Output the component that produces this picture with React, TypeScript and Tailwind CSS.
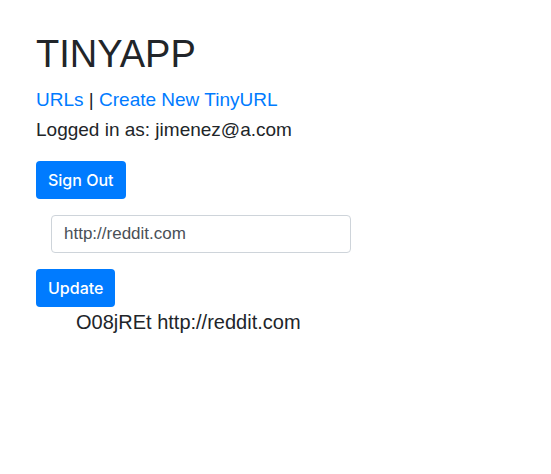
import React from 'react'

const App = () => {
  return (
    <div className="min-h-screen bg-white text-[#212529] px-9 pt-[30px]">
      <div className="font-['Liberation_Sans',Arial,sans-serif]">
        <h1 className="text-[38px] leading-[48px] font-medium mb-[7px]">TINYAPP</h1>
        <div className="text-[19px] leading-[30px] text-[#007bff]">
          <a href="#">URLs</a>
          <span className="text-[#212529]"> | </span>
          <a href="#">Create New TinyURL</a>
        </div>
        <div className="text-[19px] leading-[30px]">Logged in as: jimenez@a.com</div>
        <button className="mt-4 bg-[#007bff] text-white font-['Inter',sans-serif] font-medium text-base leading-6 px-3 py-[7px] rounded">
          Sign Out
        </button>
        <div className="mt-4 pl-[15px]">
          <input
            defaultValue="http://reddit.com"
            className="w-[300px] h-[38px] border border-[#ced4da] rounded px-3 text-[17px] text-[#495057]"
          />
        </div>
        <button className="mt-4 bg-[#007bff] text-white font-['Inter',sans-serif] font-medium text-base leading-6 px-3 py-[7px] rounded">
          Update
        </button>
        <div className="pl-10 text-[20px] leading-[30px]">O08jREt http://reddit.com</div>
      </div>
    </div>
  )
}

export default App
